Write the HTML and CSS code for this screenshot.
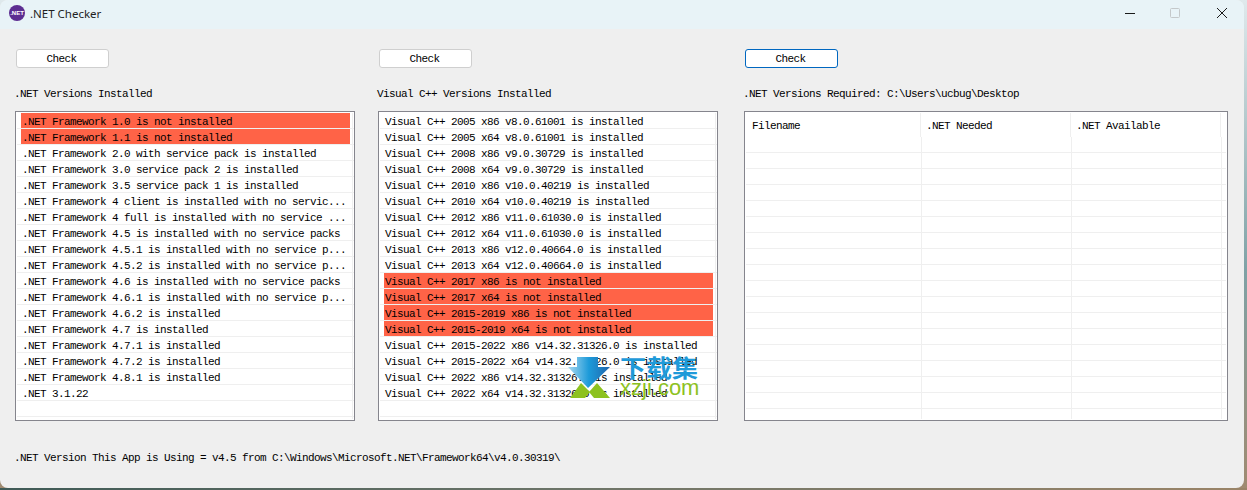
FILE: index.html
```html
<!DOCTYPE html>
<html lang="en">
<head>
<meta charset="utf-8">
<title>.NET Checker</title>
<link rel="stylesheet" href="styles.css">
</head>
<body>
<div class="window">
  <header class="titlebar">
    <svg class="app-icon" width="16" height="16" viewBox="0 0 16 16"><circle cx="8" cy="8" r="8" fill="#5c2d91"/><text x="8" y="10.2" text-anchor="middle" class="app-icon-text">.NET</text></svg>
    <span class="title">.NET Checker</span>
    <div class="controls">
      <svg class="ctl" width="46" height="29" viewBox="0 0 46 29"><path d="M18 13.5h10" stroke="#1a1a1a" stroke-width="1"/></svg>
      <svg class="ctl" width="46" height="29" viewBox="0 0 46 29"><rect x="17.5" y="8.5" width="9" height="9" rx="1" fill="none" stroke="#c4c8ca"/></svg>
      <svg class="ctl" width="46" height="29" viewBox="0 0 46 29"><path d="M18 8l10 10M28 8L18 18" stroke="#1a1a1a" stroke-width="1"/></svg>
    </div>
  </header>
  <main class="body">
    <div class="columns">
      <section class="col col-a">
        <button class="check">Check</button>
        <div class="label">.NET Versions Installed</div>
        <div class="list">
          <div class="rows">
            <div class="row"><span class="cell bad">.NET Framework 1.0 is not installed</span></div>
            <div class="row"><span class="cell bad">.NET Framework 1.1 is not installed</span></div>
            <div class="row"><span class="cell">.NET Framework 2.0 with service pack is installed</span></div>
            <div class="row"><span class="cell">.NET Framework 3.0 service pack 2 is installed</span></div>
            <div class="row"><span class="cell">.NET Framework 3.5 service pack 1 is installed</span></div>
            <div class="row"><span class="cell">.NET Framework 4 client is installed with no servic...</span></div>
            <div class="row"><span class="cell">.NET Framework 4 full is installed with no service ...</span></div>
            <div class="row"><span class="cell">.NET Framework 4.5 is installed with no service packs</span></div>
            <div class="row"><span class="cell">.NET Framework 4.5.1 is installed with no service p...</span></div>
            <div class="row"><span class="cell">.NET Framework 4.5.2 is installed with no service p...</span></div>
            <div class="row"><span class="cell">.NET Framework 4.6 is installed with no service packs</span></div>
            <div class="row"><span class="cell">.NET Framework 4.6.1 is installed with no service p...</span></div>
            <div class="row"><span class="cell">.NET Framework 4.6.2 is installed</span></div>
            <div class="row"><span class="cell">.NET Framework 4.7 is installed</span></div>
            <div class="row"><span class="cell">.NET Framework 4.7.1 is installed</span></div>
            <div class="row"><span class="cell">.NET Framework 4.7.2 is installed</span></div>
            <div class="row"><span class="cell">.NET Framework 4.8.1 is installed</span></div>
            <div class="row"><span class="cell">.NET 3.1.22</span></div>
            <div class="row"><span class="cell"></span></div>
          </div>
        </div>
      </section>
      <section class="col col-b">
        <button class="check">Check</button>
        <div class="label">Visual C++ Versions Installed</div>
        <div class="list">
          <div class="rows">
            <div class="row"><span class="cell">Visual C++ 2005 x86 v8.0.61001 is installed</span></div>
            <div class="row"><span class="cell">Visual C++ 2005 x64 v8.0.61001 is installed</span></div>
            <div class="row"><span class="cell">Visual C++ 2008 x86 v9.0.30729 is installed</span></div>
            <div class="row"><span class="cell">Visual C++ 2008 x64 v9.0.30729 is installed</span></div>
            <div class="row"><span class="cell">Visual C++ 2010 x86 v10.0.40219 is installed</span></div>
            <div class="row"><span class="cell">Visual C++ 2010 x64 v10.0.40219 is installed</span></div>
            <div class="row"><span class="cell">Visual C++ 2012 x86 v11.0.61030.0 is installed</span></div>
            <div class="row"><span class="cell">Visual C++ 2012 x64 v11.0.61030.0 is installed</span></div>
            <div class="row"><span class="cell">Visual C++ 2013 x86 v12.0.40664.0 is installed</span></div>
            <div class="row"><span class="cell">Visual C++ 2013 x64 v12.0.40664.0 is installed</span></div>
            <div class="row"><span class="cell bad">Visual C++ 2017 x86 is not installed</span></div>
            <div class="row"><span class="cell bad">Visual C++ 2017 x64 is not installed</span></div>
            <div class="row"><span class="cell bad">Visual C++ 2015-2019 x86 is not installed</span></div>
            <div class="row"><span class="cell bad">Visual C++ 2015-2019 x64 is not installed</span></div>
            <div class="row"><span class="cell">Visual C++ 2015-2022 x86 v14.32.31326.0 is installed</span></div>
            <div class="row"><span class="cell">Visual C++ 2015-2022 x64 v14.32.31326.0 is installed</span></div>
            <div class="row"><span class="cell">Visual C++ 2022 x86 v14.32.31326.0 is installed</span></div>
            <div class="row"><span class="cell">Visual C++ 2022 x64 v14.32.31326.0 is installed</span></div>
            <div class="row"><span class="cell"></span></div>
          </div>
        </div>
      </section>
      <section class="col col-c">
        <button class="check focused">Check</button>
        <div class="label">.NET Versions Required: C:\Users\ucbug\Desktop</div>
        <div class="list grid">
          <div class="grid-head">
            <span class="h h1">Filename</span><span class="h h2">.NET Needed</span><span class="h h3">.NET Available</span><span class="h h4"></span>
          </div>
          <div class="grid-row"><i></i><i></i><i></i><i></i></div>
          <div class="grid-row"><i></i><i></i><i></i><i></i></div>
          <div class="grid-row"><i></i><i></i><i></i><i></i></div>
          <div class="grid-row"><i></i><i></i><i></i><i></i></div>
          <div class="grid-row"><i></i><i></i><i></i><i></i></div>
          <div class="grid-row"><i></i><i></i><i></i><i></i></div>
          <div class="grid-row"><i></i><i></i><i></i><i></i></div>
          <div class="grid-row"><i></i><i></i><i></i><i></i></div>
          <div class="grid-row"><i></i><i></i><i></i><i></i></div>
          <div class="grid-row"><i></i><i></i><i></i><i></i></div>
          <div class="grid-row"><i></i><i></i><i></i><i></i></div>
          <div class="grid-row"><i></i><i></i><i></i><i></i></div>
          <div class="grid-row"><i></i><i></i><i></i><i></i></div>
          <div class="grid-row"><i></i><i></i><i></i><i></i></div>
          <div class="grid-row"><i></i><i></i><i></i><i></i></div>
          <div class="grid-row"><i></i><i></i><i></i><i></i></div>
          <div class="grid-row"><i></i><i></i><i></i><i></i></div>
          <div class="grid-row last"><i></i><i></i><i></i><i></i></div>
        </div>
      </section>
    </div>
    <div class="label footer">.NET Version This App is Using = v4.5 from C:\Windows\Microsoft.NET\Framework64\v4.0.30319\</div>
  </main>
  <div class="watermark">
    <svg class="wm-logo" width="50" height="44" viewBox="0 0 50 44">
      <defs><linearGradient id="wmg" x1="0" y1="0" x2="1" y2="0"><stop offset="0" stop-color="#a9d8f0"/><stop offset=".5" stop-color="#1c9ad9"/><stop offset="1" stop-color="#2166ad"/></linearGradient></defs>
      <path d="M19 26L28 35L23 41H8Z" fill="#8dc21f"/>
      <path d="M35 26L27 35L32 41H48Z" fill="#8dc21f"/>
      <path d="M15 0H36V10H48L26 31L6 10H15Z" fill="url(#wmg)"/>
    </svg>
    <div class="wm-text"><span class="wm-cn">下载集</span><span class="wm-en">xzji.com</span></div>
  </div>
</div>
</body>
</html>
```

FILE: styles.css
```css
* { box-sizing: border-box; }
html, body { margin: 0; height: 100%; }
body {
  overflow: hidden;
  background:
    linear-gradient(to right, #3f5a56, #6c7468 45%, #9a8468) bottom / 100% 2px no-repeat,
    linear-gradient(to bottom, #dfe9ec 0, #7fa2a6 55%, #a08a70 100%);
}
.window {
  position: relative;
  width: 1244px;
  height: 488px;
  background: #efefef;
  border-radius: 8px;
  overflow: hidden;
}
.titlebar {
  height: 29px;
  display: flex;
  align-items: center;
  padding-left: 9px;
  background: #e8f3f7;
}
.app-icon { flex: none; margin-top: -3px; }
.app-icon-text { font: 700 6px "Liberation Sans", sans-serif; fill: #fff; }
.title {
  margin-left: 5px;
  margin-top: -2px;
  font: 11.5px "Noto Sans", sans-serif;
  color: #1f1f1f;
}
.controls { margin-left: auto; margin-right: -1px; display: flex; }
.ctl { display: block; flex: none; }
.body {
  padding: 20px 0 0 15px;
  font-family: "Liberation Mono", monospace;
  font-size: 11px;
  letter-spacing: -0.6px;
  color: #000;
}
.columns { display: flex; }
.col-a, .col-b { width: 340px; }
.col-b { margin-left: 23px; }
.col-c { width: 484px; margin-left: 26px; }
.check {
  display: block;
  width: 93px;
  height: 19px;
  margin: 0 0 0 1px;
  padding: 0 2px 0 0;
  background: #fff;
  border: 1px solid #cfcfcf;
  border-radius: 3px;
  font: inherit;
  letter-spacing: inherit;
  color: #000;
}
.check.focused { border-color: #0067c0; }
.label {
  height: 16px;
  line-height: 18px;
  margin: 17px 0 10px -1px;
  white-space: pre;
}
.footer { margin: 28px 0 0 -1px; }
.list {
  height: 310px;
  background: #fff;
  border: 1px solid #85858d;
  padding: 1px;
}
.rows { width: 336px; border-right: 1px solid #efefef; height: 100%; }
.row {
  height: 16px;
  padding: 0 3px 0 4px;
  border-bottom: 1px solid #efefef;
  width: 337px;
}
.cell {
  display: block;
  height: 15px;
  line-height: 19px;
  width: 329px;
  padding-left: 1px;
  white-space: pre;
}
.cell.bad { background: #ff6347; }
.grid { padding: 1px 0 0 1px; }
.grid-head { display: flex; height: 24px; }
.h {
  flex: none;
  height: 24px;
  line-height: 26px;
  padding-left: 5px;
  border-right: 1px solid #efefef;
  white-space: pre;
}
.h1 { width: 175px; padding-left: 6px; }
.h2 { width: 150px; }
.h3 { width: 150px; }
.h4 { width: 6px; border: 0; }
.grid-row { display: flex; height: 16px; width: 480px; border-bottom: 1px solid #efefef; }
.grid-row.last { height: 10px; border-bottom: 0; }
.grid-row i { display: block; flex: none; border-right: 1px solid #efefef; }
.grid-row i:nth-child(1) { width: 176px; }
.grid-row i:nth-child(2) { width: 150px; }
.grid-row i:nth-child(3) { width: 150px; }
.grid-row i:nth-child(4) { width: 4px; border: 0; }
.watermark {
  position: absolute;
  left: 562px;
  top: 357px;
  display: flex;
  gap: 8px;
  pointer-events: none;
}
.wm-logo { display: block; flex: none; }
.wm-text { display: flex; flex-direction: column; width: 80px; }
.wm-cn {
  font: 700 26px/22px "Noto Sans CJK SC", sans-serif;
  color: #1f9ad9;
  white-space: nowrap;
  transform: scaleY(0.9);
  transform-origin: top;
}
.wm-en {
  font: 22px/20px "Liberation Sans", sans-serif;
  color: #8dc21f;
  white-space: nowrap;
  margin-top: -1px;
}
```
